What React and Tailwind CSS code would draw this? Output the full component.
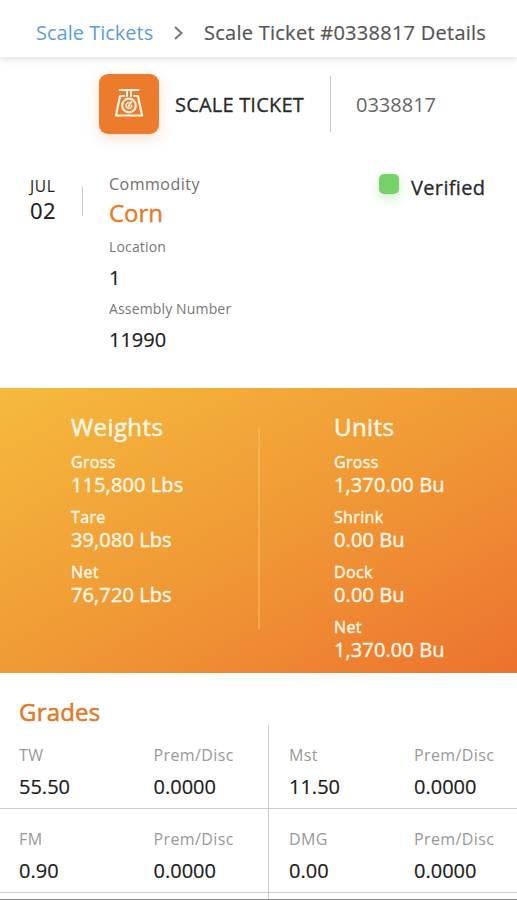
import React from "react";

const weights = [
  { label: "Gross", value: "115,800 Lbs" },
  { label: "Tare", value: "39,080 Lbs" },
  { label: "Net", value: "76,720 Lbs" },
];

const units = [
  { label: "Gross", value: "1,370.00 Bu" },
  { label: "Shrink", value: "0.00 Bu" },
  { label: "Dock", value: "0.00 Bu" },
  { label: "Net", value: "1,370.00 Bu" },
];

const grades = [
  [
    { name: "TW", value: "55.50", premDisc: "0.0000" },
    { name: "Mst", value: "11.50", premDisc: "0.0000" },
  ],
  [
    { name: "FM", value: "0.90", premDisc: "0.0000" },
    { name: "DMG", value: "0.00", premDisc: "0.0000" },
  ],
];

const ScaleIcon = () => (
  <svg
    width="30"
    height="30"
    viewBox="0 0 30 30"
    fill="none"
    stroke="#fff3e2"
    strokeWidth="2.2"
    strokeLinecap="round"
    strokeLinejoin="round"
  >
    <path d="M5.500 2h19" />
    <path d="M13 2v6M17 2v6" strokeWidth="2" />
    <path d="M10 8H6L2 27.500h26L24 8h-4" />
    <circle cx="15" cy="17.500" r="6.800" />
    <path d="M17.800 17.500a2.900 2.900 0 1 1-2.800-2.900" strokeWidth="1.500" />
    <path d="M14.500 18.300l2.800-4.300" strokeWidth="1.800" />
  </svg>
);

const Stats = ({ title, items }) => (
  <div className="flex flex-col">
    <h2 className="mb-[10px] pt-px text-[24px] leading-[30px] tracking-[0.4px] [-webkit-text-stroke:0.5px]">
      {title}
    </h2>
    <div className="flex flex-col gap-[10px] [-webkit-text-stroke:0.4px]">
      {items.map((item) => (
        <div key={item.label}>
          <p className="text-[16px] leading-[20px] tracking-[0.35px]">{item.label}</p>
          <p className="text-[20px] leading-[25px] tracking-[0.1px]">{item.value}</p>
        </div>
      ))}
    </div>
  </div>
);

const GradeField = ({ label, value }) => (
  <div>
    <p className="text-[16px] leading-[24px] tracking-[0.4px] text-[#999999]">{label}</p>
    <p className="mt-1 text-[20px] leading-[32px] text-[#1c1c1c] [-webkit-text-stroke:0.2px]">
      {value}
    </p>
  </div>
);

const App = () => {
  return (
    <div className="flex h-[900px] w-[517px] flex-col overflow-hidden border-b border-[#8a8a8a] bg-white font-['Open_Sans',sans-serif]">
      <header className="flex h-[57px] shrink-0 items-center pt-[8px] pl-[36px] text-[20px] shadow-[0_2px_7px_rgba(0,0,0,0.13)]">
        <a className="w-[138px] text-[#5ba0dc]">Scale Tickets</a>
        <svg width="10" height="14" viewBox="0 0 10 14" fill="none" stroke="#777777" strokeWidth="2">
          <path d="M1 1l6.500 6L1 13" />
        </svg>
        <span className="ml-[20px] whitespace-nowrap tracking-[0.26px] text-[#555555] [-webkit-text-stroke:0.2px]">
          Scale Ticket #0338817 Details
        </span>
      </header>

      <section className="mt-[17px] flex h-[60px] shrink-0 items-center pl-[99px]">
        <div className="flex h-[60px] w-[60px] items-center justify-center rounded-[9px] bg-[#ec7b2d] pb-[2px] shadow-[0_4px_14px_rgba(236,123,45,0.25)]">
          <ScaleIcon />
        </div>
        <h1 className="ml-[16px] w-[155px] pt-[2px] text-[20px] whitespace-nowrap tracking-[0.2px] text-[#2a2a2a] [-webkit-text-stroke:0.3px]">
          SCALE TICKET
        </h1>
        <div className="h-[56px] w-px bg-[#cccccc]" />
        <span className="ml-[25px] pt-px text-[20px] text-[#666666]">0338817</span>
      </section>

      <section className="flex h-[254px] shrink-0 pt-[39px] pl-[30px]">
        <div className="w-[52px] text-[#1c1c1c]">
          <p className="text-[15.5px] leading-[27px] tracking-[0.6px]">JUL</p>
          <p className="text-[22px] leading-[21px] tracking-[0.4px] [-webkit-text-stroke:0.2px]">02</p>
        </div>
        <div className="mt-[13px] h-[30px] w-px bg-[#cccccc]" />
        <div className="ml-[26px] w-[269px]">
          <p className="text-[16px] leading-[22px] tracking-[0.5px] text-[#707070]">Commodity</p>
          <p className="text-[24px] leading-[36px] text-[#e87a25] [-webkit-text-stroke:0.4px]">
            Corn
          </p>
          <div className="pt-px">
            <p className="text-[14px] leading-[30px] tracking-[0.150px] text-[#777777]">Location</p>
            <p className="text-[20px] leading-[32px] text-[#1c1c1c] [-webkit-text-stroke:0.2px]">1</p>
            <p className="text-[14px] leading-[30px] tracking-[0.150px] text-[#777777]">
              Assembly Number
            </p>
            <p className="text-[20px] leading-[31px] text-[#1c1c1c] [-webkit-text-stroke:0.2px]">
              11990
            </p>
          </div>
        </div>
        <div className="mt-px ml-[1px] h-[20px] w-[20px] rounded-[5px] bg-[#76d268] shadow-[0_4px_12px_rgba(118,210,104,0.4)]" />
        <span className="ml-[12px] pt-px text-[20px] leading-[28px] tracking-[0.35px] text-[#2a2a2a] [-webkit-text-stroke:0.3px]">
          Verified
        </span>
      </section>

      <section className="flex h-[285px] shrink-0 bg-linear-to-br from-[#f5ba3d] via-[#f09a36] to-[#ec722e] pt-[23px] pl-[71px] text-[#fff8e8]">
        <div className="w-[187px]">
          <Stats title="Weights" items={weights} />
        </div>
        <div className="mt-[16px] h-[202px] w-[2px] bg-[#f6b65a]/70" />
        <div className="ml-[74px]">
          <Stats title="Units" items={units} />
        </div>
      </section>

      <section className="shrink-0">
        <h2 className="h-[52px] pt-[23px] pl-[19px] text-[24px] leading-[32px] tracking-[0.2px] text-[#e07b2a] [-webkit-text-stroke:0.6px]">
          Grades
        </h2>
        {grades.map((row, i) => (
          <div key={i} className="flex h-[84px] border-b border-[#cccccc]">
            {row.map((grade, j) => (
              <div
                key={grade.name}
                className={
                  j === 0
                    ? "flex w-[269px] border-r border-[#cccccc] pt-[18px] pl-[19px]"
                    : "flex pt-[18px] pl-[20px]"
                }
              >
                <div className={j === 0 ? "w-[134.5px]" : "w-[125px]"}>
                  <GradeField label={grade.name} value={grade.value} />
                </div>
                <GradeField label="Prem/Disc" value={grade.premDisc} />
              </div>
            ))}
          </div>
        ))}
        <div className="h-[8px] w-[269px] border-r border-[#cccccc]" />
      </section>
    </div>
  );
};

export default App;
